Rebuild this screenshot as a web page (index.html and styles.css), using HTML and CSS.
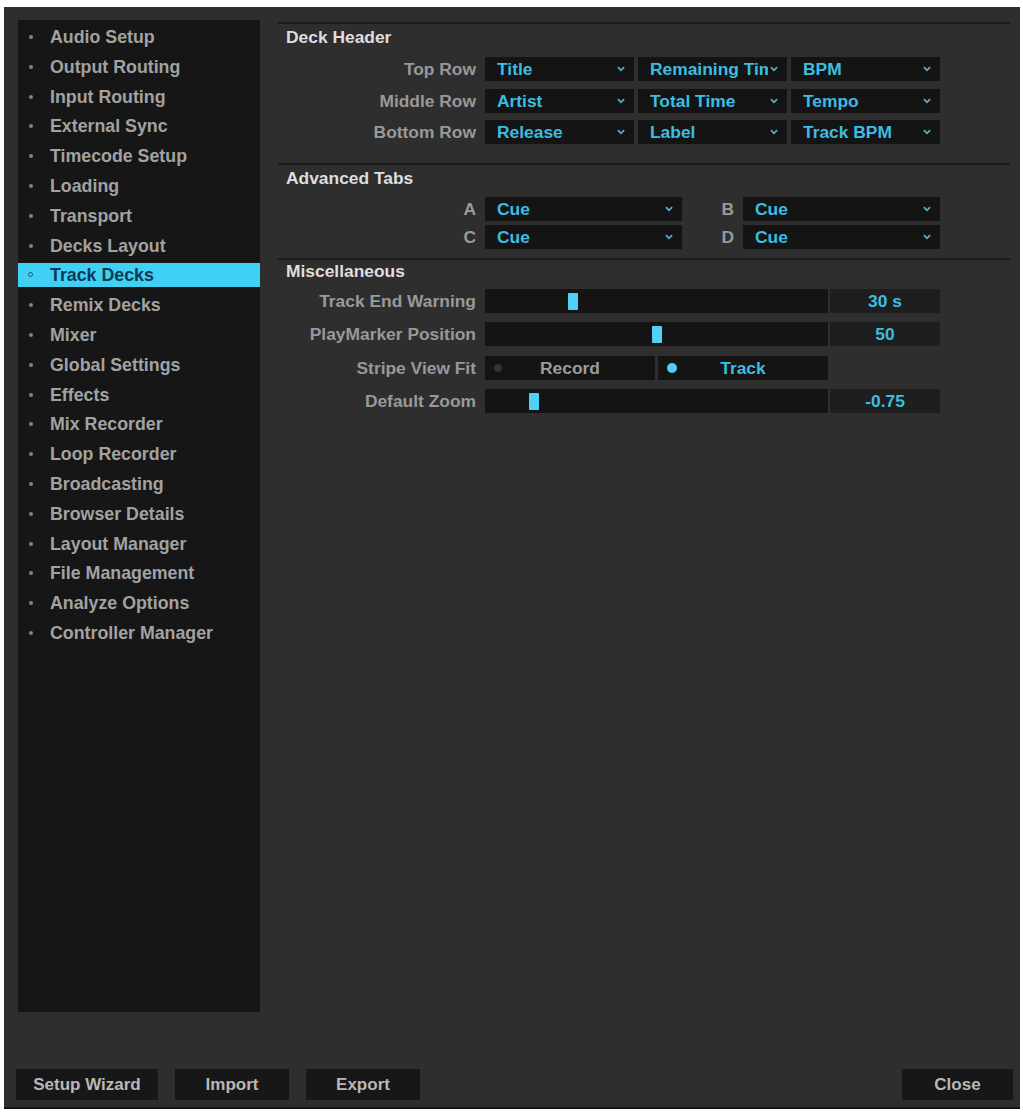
FILE: index.html
```html
<!DOCTYPE html>
<html lang="en">
<head>
    <meta charset="UTF-8">
    <meta name="viewport" content="width=device-width, initial-scale=1.0">
    <title>Preferences</title>
    <link rel="stylesheet" href="styles.css">
</head>
<body>

<div class="window">
    <div class="content">
        <!-- Preference pages -->
        <ul class="sidebar">
            <li>Audio Setup</li>
            <li>Output Routing</li>
            <li>Input Routing</li>
            <li>External Sync</li>
            <li>Timecode Setup</li>
            <li>Loading</li>
            <li>Transport</li>
            <li>Decks Layout</li>
            <li class="active">Track Decks</li>
            <li>Remix Decks</li>
            <li>Mixer</li>
            <li>Global Settings</li>
            <li>Effects</li>
            <li>Mix Recorder</li>
            <li>Loop Recorder</li>
            <li>Broadcasting</li>
            <li>Browser Details</li>
            <li>Layout Manager</li>
            <li>File Management</li>
            <li>Analyze Options</li>
            <li>Controller Manager</li>
        </ul>

        <div class="panel">
            <!-- Deck Header -->
            <section class="group deck-header">
                <h3>Deck Header</h3>
                <div class="rows">
                    <div class="row">
                        <span class="label">Top Row</span>
                        <div class="select"><span>Title</span><svg viewBox="0 0 9 6"><path d="M1 1 L4.5 4.5 L8 1"/></svg></div>
                        <div class="select"><span>Remaining Time</span><svg viewBox="0 0 9 6"><path d="M1 1 L4.5 4.5 L8 1"/></svg></div>
                        <div class="select"><span>BPM</span><svg viewBox="0 0 9 6"><path d="M1 1 L4.5 4.5 L8 1"/></svg></div>
                    </div>
                    <div class="row">
                        <span class="label">Middle Row</span>
                        <div class="select"><span>Artist</span><svg viewBox="0 0 9 6"><path d="M1 1 L4.5 4.5 L8 1"/></svg></div>
                        <div class="select"><span>Total Time</span><svg viewBox="0 0 9 6"><path d="M1 1 L4.5 4.5 L8 1"/></svg></div>
                        <div class="select"><span>Tempo</span><svg viewBox="0 0 9 6"><path d="M1 1 L4.5 4.5 L8 1"/></svg></div>
                    </div>
                    <div class="row">
                        <span class="label">Bottom Row</span>
                        <div class="select"><span>Release</span><svg viewBox="0 0 9 6"><path d="M1 1 L4.5 4.5 L8 1"/></svg></div>
                        <div class="select"><span>Label</span><svg viewBox="0 0 9 6"><path d="M1 1 L4.5 4.5 L8 1"/></svg></div>
                        <div class="select"><span>Track BPM</span><svg viewBox="0 0 9 6"><path d="M1 1 L4.5 4.5 L8 1"/></svg></div>
                    </div>
                </div>
            </section>

            <!-- Advanced Tabs -->
            <section class="group advanced-tabs">
                <h3>Advanced Tabs</h3>
                <div class="rows">
                    <div class="row">
                        <span class="label">A</span>
                        <div class="select"><span>Cue</span><svg viewBox="0 0 9 6"><path d="M1 1 L4.5 4.5 L8 1"/></svg></div>
                        <span class="label">B</span>
                        <div class="select"><span>Cue</span><svg viewBox="0 0 9 6"><path d="M1 1 L4.5 4.5 L8 1"/></svg></div>
                    </div>
                    <div class="row">
                        <span class="label">C</span>
                        <div class="select"><span>Cue</span><svg viewBox="0 0 9 6"><path d="M1 1 L4.5 4.5 L8 1"/></svg></div>
                        <span class="label">D</span>
                        <div class="select"><span>Cue</span><svg viewBox="0 0 9 6"><path d="M1 1 L4.5 4.5 L8 1"/></svg></div>
                    </div>
                </div>
            </section>

            <!-- Miscellaneous -->
            <section class="group misc">
                <h3>Miscellaneous</h3>
                <div class="rows">
                    <div class="row">
                        <span class="label">Track End Warning</span>
                        <div class="slider"><span class="thumb" style="left: 83px"></span></div>
                        <div class="value">30 s</div>
                    </div>
                    <div class="row">
                        <span class="label">PlayMarker Position</span>
                        <div class="slider"><span class="thumb" style="left: 167px"></span></div>
                        <div class="value">50</div>
                    </div>
                    <div class="row">
                        <span class="label">Stripe View Fit</span>
                        <div class="toggle">
                            <div class="option"><span class="dot"></span>Record</div>
                            <div class="option on"><span class="dot"></span>Track</div>
                        </div>
                    </div>
                    <div class="row">
                        <span class="label">Default Zoom</span>
                        <div class="slider"><span class="thumb" style="left: 44px"></span></div>
                        <div class="value">-0.75</div>
                    </div>
                </div>
            </section>
        </div>
    </div>

    <div class="footer">
        <button>Setup Wizard</button>
        <button class="narrow">Import</button>
        <button class="narrow">Export</button>
        <button class="narrow close">Close</button>
    </div>
</div>

</body>
</html>
```

FILE: styles.css
```css
body {
    margin: 0;
    padding: 0;
    background-color: #fff;
    font-family: "Liberation Sans", Arial, sans-serif;
    font-weight: bold;
    font-size: 17.4px;
}

.window {
    margin: 7px 3px 0 4px;
    height: 1100px;
    background-color: #2e2e2e;
    border-bottom: 2px solid #141414;
    display: flex;
    flex-direction: column;
}

.content {
    display: flex;
    padding: 13px 10px 0 14px;
}

/* Left page list */
.sidebar {
    list-style: none;
    margin: 0;
    padding: 5px 0 0 0;
    width: 242px;
    height: 987px;
    background-color: #161616;
    display: flex;
    flex-direction: column;
    gap: 5.8px;
    font-size: 17.8px;
}

.sidebar li {
    height: 24px;
    line-height: 25px;
    padding-left: 32px;
    color: #a2a2a2;
    position: relative;
    white-space: nowrap;
}

.sidebar li::before {
    content: "";
    position: absolute;
    left: 11px;
    top: 10px;
    width: 4px;
    height: 4px;
    border-radius: 50%;
    background-color: #858585;
}

.sidebar li.active {
    background-color: #3fd0f4;
    color: #0c3a55;
}

.sidebar li.active::before {
    left: 10px;
    top: 9px;
    width: 3px;
    height: 3px;
    background: none;
    border: 1.5px solid #1a5a6a;
}

/* Right settings panel */
.panel {
    flex: 1;
    margin-left: 18px;
    padding-top: 2px;
}

.group {
    border-top: 2px solid #1c1c1c;
    padding-left: 8px;
}

.group h3 {
    margin: 0;
    font-size: 17.4px;
    line-height: 22px;
    color: #dedede;
}

.rows {
    display: flex;
    flex-direction: column;
}

.row {
    display: flex;
    height: 24px;
    align-items: stretch;
}

.label {
    width: 190px;
    margin-right: 9px;
    text-align: right;
    line-height: 24px;
    color: #999;
    white-space: nowrap;
}

.deck-header {
    padding-top: 2px;
    padding-bottom: 19px;
}

.deck-header .rows {
    margin-top: 9px;
    gap: 7.5px;
}

.deck-header .select {
    width: 149px;
    margin-right: 4px;
}

.advanced-tabs {
    padding-top: 2px;
    padding-bottom: 9px;
}

.advanced-tabs .rows {
    margin-top: 8px;
    gap: 4px;
}

.advanced-tabs .select {
    width: 197px;
}

.advanced-tabs .select + .label {
    width: 52px;
}

.misc .rows {
    margin-top: 7px;
    gap: 9.3px;
}

/* Dropdowns */
.select {
    background-color: #141414;
    display: flex;
    align-items: center;
    padding: 0 9px 0 12px;
    box-sizing: border-box;
    color: #3dbde0;
}

.select span {
    flex: 1;
    overflow: hidden;
    white-space: nowrap;
    line-height: 24px;
    margin-right: 2px;
}

.select svg {
    width: 8px;
    height: 6px;
    flex-shrink: 0;
    fill: none;
    stroke: #58afc6;
    stroke-width: 2;
}

/* Sliders */
.slider {
    width: 343px;
    background-color: #141414;
    position: relative;
}

.thumb {
    position: absolute;
    top: 4px;
    width: 10px;
    height: 17px;
    border-radius: 1px;
    background-color: #4fd2f6;
}

.value {
    width: 110px;
    margin-left: 2px;
    background-color: #1e1e1e;
    color: #3dbde0;
    text-align: center;
    line-height: 24px;
}

/* Two-way toggle */
.toggle {
    display: flex;
    gap: 3px;
    width: 343px;
}

.option {
    flex: 1;
    position: relative;
    background-color: #141414;
    text-align: center;
    line-height: 24px;
    color: #9c9c9c;
}

.option .dot {
    position: absolute;
    left: 9px;
    top: 8px;
    width: 8px;
    height: 8px;
    border-radius: 50%;
    background-color: #333;
}

.option.on {
    color: #3dbde0;
}

.option.on .dot {
    top: 7px;
    width: 10px;
    height: 10px;
    background-color: #4fd2f6;
}

/* Bottom buttons */
.footer {
    margin-top: auto;
    display: flex;
    gap: 17px;
    padding: 0 7px 7px 12px;
}

.footer button {
    width: 142px;
    height: 31px;
    border: none;
    background-color: #171717;
    color: #b8b8b8;
    font-family: inherit;
    font-weight: bold;
    font-size: 17px;
    padding: 0;
}

.footer button.narrow {
    width: 114px;
}

.footer button.close {
    margin-left: auto;
    width: 111px;
}
```
